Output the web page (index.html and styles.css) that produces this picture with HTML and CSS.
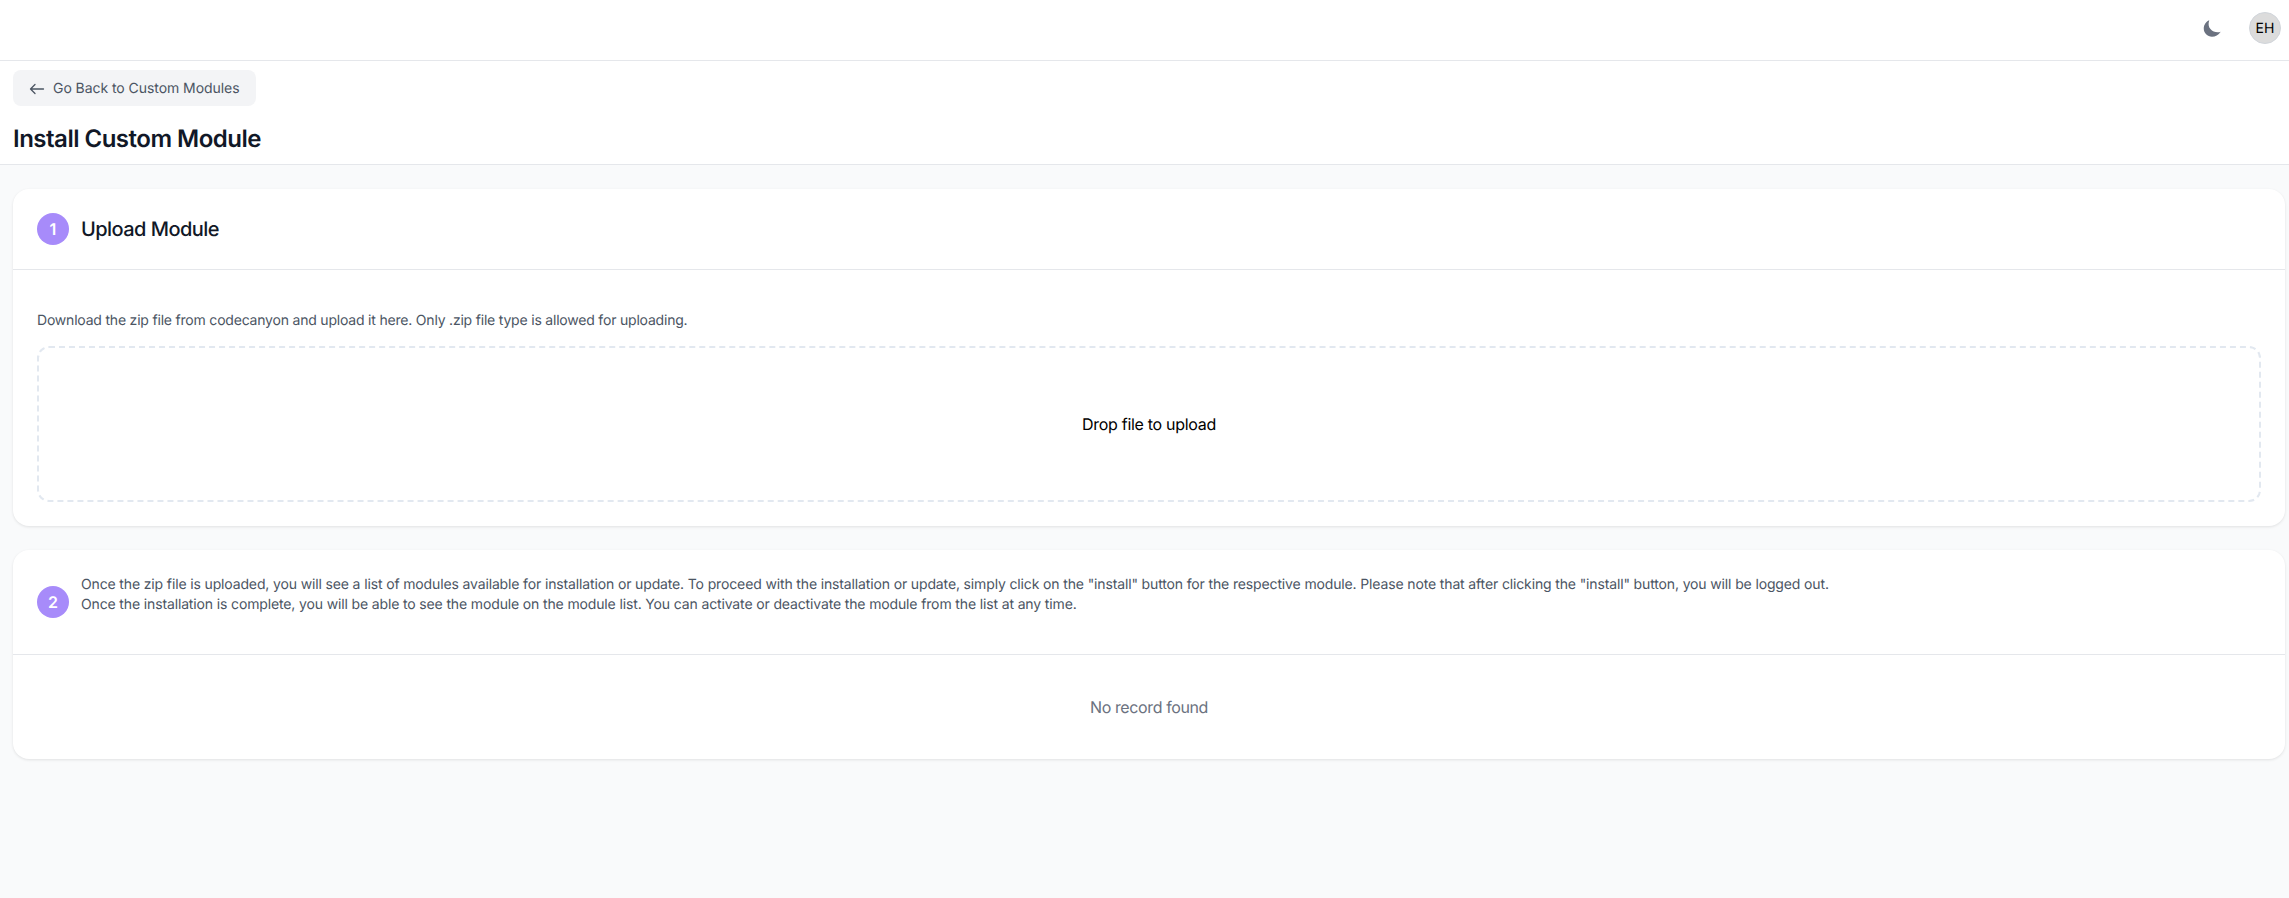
FILE: index.html
```html
<!DOCTYPE html>
<html lang="en">
<head>
    <meta charset="UTF-8">
    <meta name="viewport" content="width=device-width, initial-scale=1.0">
    <title>Install Custom Module</title>
    <link rel="stylesheet" href="styles.css">
</head>
<body>
    <header class="topbar">
        <svg class="moon" viewBox="0 0 24 24" width="22" height="22" aria-hidden="true">
            <path d="M9 3.500C5.500 5 3 8.500 3 12.500c0 5 4 9 9 9 3.700 0 7-2 9.500-5.500C15.500 18.500 5.500 13.500 9 3.500Z"/>
        </svg>
        <div class="avatar">EH</div>
    </header>
    <section class="page-head">
        <a class="back-btn" href="#">
            <svg viewBox="0 0 16 16" width="16" height="16" aria-hidden="true">
                <path d="M14.500 8H1.500M6 3.500 1.500 8 6 12.500" fill="none" stroke="currentColor" stroke-width="1.300" stroke-linecap="round" stroke-linejoin="round"/>
            </svg>
            Go Back to Custom Modules
        </a>
        <h1>Install Custom Module</h1>
    </section>
    <main>
        <section class="card">
            <div class="card-head card-head-upload">
                <span class="step">1</span>
                <h2>Upload Module</h2>
            </div>
            <div class="card-body">
                <p class="hint">Download the zip file from codecanyon and upload it here. Only .zip file type is allowed for uploading.</p>
                <div class="dropzone">Drop file to upload</div>
            </div>
        </section>
        <section class="card">
            <div class="card-head card-head-list">
                <span class="step">2</span>
                <p class="steps-text">Once the zip file is uploaded, you will see a list of modules available for installation or update. To proceed with the installation or update, simply click on the "install" button for the respective module. Please note that after clicking the "install" button, you will be logged out.<br>Once the installation is complete, you will be able to see the module on the module list. You can activate or deactivate the module from the list at any time.</p>
            </div>
            <div class="empty">No record found</div>
        </section>
    </main>
</body>
</html>
```

FILE: styles.css
```css
* {
    box-sizing: border-box;
}

html,
body {
    height: 100%;
}

body {
    margin: 0;
    background-color: #f9fafb;
    font-family: Inter, "Noto Sans", sans-serif;
    font-size: 14px;
    color: #111827;
    text-rendering: geometricPrecision;
    overflow: hidden;
}

.topbar {
    display: flex;
    align-items: center;
    justify-content: flex-end;
    gap: 26px;
    height: 61px;
    padding: 0 8px 4px 0;
    background-color: white;
    border-bottom: 1px solid #e5e7eb;
}

.moon {
    fill: #6b7280;
}

.avatar {
    display: flex;
    align-items: center;
    justify-content: center;
    width: 32px;
    height: 32px;
    border-radius: 50%;
    background-color: #dcdcdc;
    border: 1px solid #d1d5db;
    font-size: 14px;
    color: #000;
}

.page-head {
    height: 104px;
    padding: 9px 13px 0;
    background-color: white;
    border-bottom: 1px solid #e5e7eb;
}

.back-btn {
    display: inline-flex;
    align-items: center;
    gap: 8px;
    height: 36px;
    padding: 1px 17px 0 16px;
    border-radius: 8px;
    background-color: #f3f4f6;
    color: #4b5563;
    text-decoration: none;
    line-height: 20px;
    letter-spacing: -0.06px;
}

h1 {
    margin: 17px 0 0;
    font-size: 24px;
    line-height: 32px;
    font-weight: 600;
    letter-spacing: -0.5px;
    color: #111827;
}

main {
    display: flex;
    flex-direction: column;
    gap: 24px;
    padding: 24px 4px 0 13px;
}

.card {
    background-color: white;
    border-radius: 16px;
    box-shadow: 0 1px 3px rgba(0, 0, 0, 0.1);
}

.card-head {
    display: flex;
    align-items: center;
    gap: 12px;
    padding: 0 24px;
    border-bottom: 1px solid #e5e7eb;
}

.card-head-upload {
    height: 81px;
}

.card-head-list {
    height: 105px;
    padding-bottom: 1px;
}

.step {
    display: flex;
    flex-shrink: 0;
    align-items: center;
    justify-content: center;
    width: 32px;
    height: 32px;
    border-radius: 50%;
    background-color: #a78bfa;
    color: white;
    font-size: 16px;
    font-weight: 600;
}

h2 {
    margin: 0;
    font-size: 20px;
    line-height: 28px;
    font-weight: 500;
    letter-spacing: -0.55px;
    color: #111827;
}

.card-body {
    padding: 41px 24px 24px;
}

.hint {
    margin: 0 0 15px;
    line-height: 20px;
    letter-spacing: -0.2px;
    color: #4b5563;
}

.dropzone {
    display: flex;
    align-items: center;
    justify-content: center;
    height: 156px;
    border: 2px dashed #e2e8f0;
    border-radius: 12px;
    font-size: 16px;
    letter-spacing: -0.3px;
    color: #000;
}

.steps-text {
    margin: 0 0 13px;
    line-height: 20px;
    letter-spacing: -0.14px;
    color: #4b5563;
}

.empty {
    display: flex;
    align-items: center;
    justify-content: center;
    height: 104px;
    font-size: 16px;
    letter-spacing: -0.38px;
    color: #6b7280;
}
```
